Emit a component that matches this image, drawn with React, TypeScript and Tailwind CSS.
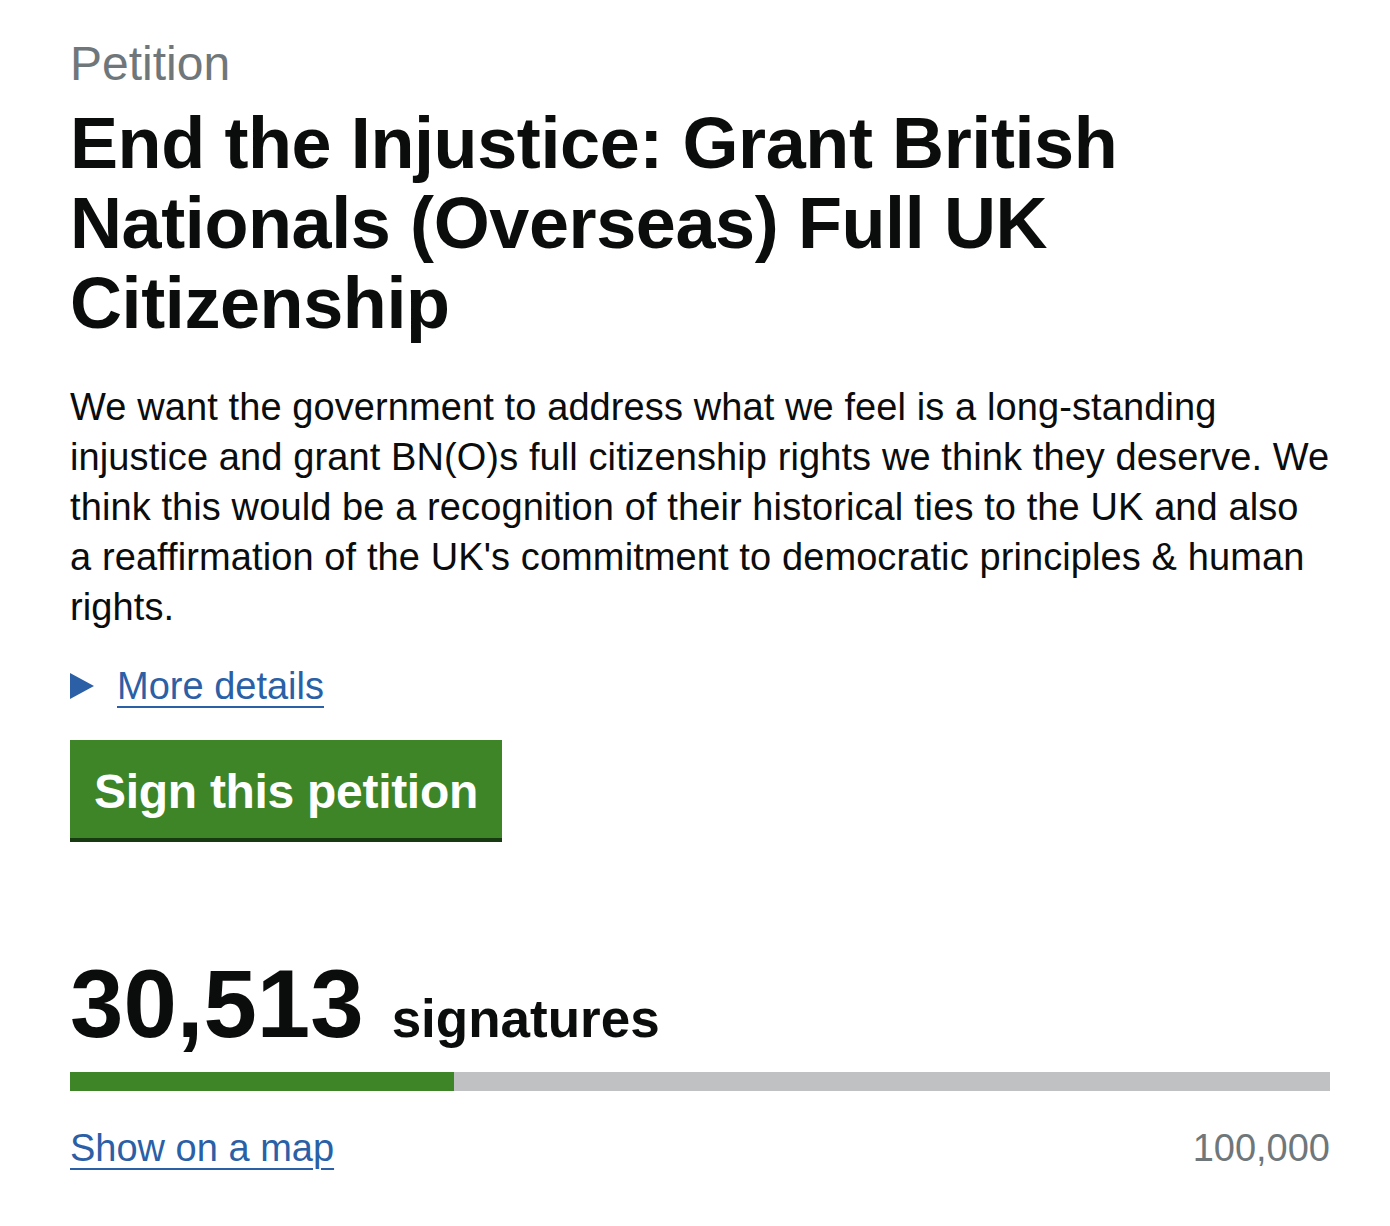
import React from "react";

export default function App() {
  return (
    <div className="min-h-[1226px] bg-white pl-[70px] pr-[60px] pt-[36px] font-['Liberation_Sans',Arial,Helvetica,sans-serif] text-[#0b0c0c]">
      <div className="text-[48px] leading-[56px] text-[#6f777b]">Petition</div>
      <h1 className="mt-[11px] text-[72px] font-bold leading-[80px] tracking-[-0.4px]">
        End the Injustice: Grant British Nationals (Overseas) Full UK Citizenship
      </h1>
      <p className="mt-[39px] text-[38px] leading-[50px] tracking-[0.1px]">
        We want the government to address what we feel is a long-standing injustice and grant BN(O)s full
        citizenship rights we think they deserve. We think this would be a recognition of their historical ties to
        the UK and also a reaffirmation of the UK's commitment to democratic principles &amp; human rights.
      </p>
      <div className="mt-[29px] flex items-center text-[38px] leading-[50px]">
        <svg width="24" height="26" viewBox="0 0 24 26" className="mr-[23px]">
          <polygon points="0,0 24,13 0,26" fill="#2b5fa6" />
        </svg>
        <a href="#" className="text-[#2b5fa6] underline decoration-2 underline-offset-[7px]">
          More details
        </a>
      </div>
      <div className="mt-[29px]">
        <button className="w-[432px] bg-[#3d8527] pt-[28px] pb-[22px] text-center text-[48px] font-bold leading-[48px] tracking-[-0.3px] text-white shadow-[0_4px_0_#183a10]">
          Sign this petition
        </button>
      </div>
      <div className="mt-[118px] flex items-baseline">
        <span className="text-[96px] font-bold leading-[96px]">30,513</span>
        <span className="ml-[28px] text-[53px] font-bold leading-[60px]">signatures</span>
      </div>
      <div className="mt-[20px] flex h-[19px] w-full bg-[#bfc1c3]">
        <div className="h-full bg-[#3d8527]" style={{ width: `${(30513 / 100000) * 100}%` }} />
      </div>
      <div className="mt-[32px] flex items-center justify-between text-[38px] leading-[50px]">
        <a href="#" className="text-[#2b5fa6] underline decoration-2 underline-offset-[7px]">
          Show on a map
        </a>
        <span className="text-[#6f777b]">100,000</span>
      </div>
    </div>
  );
}
